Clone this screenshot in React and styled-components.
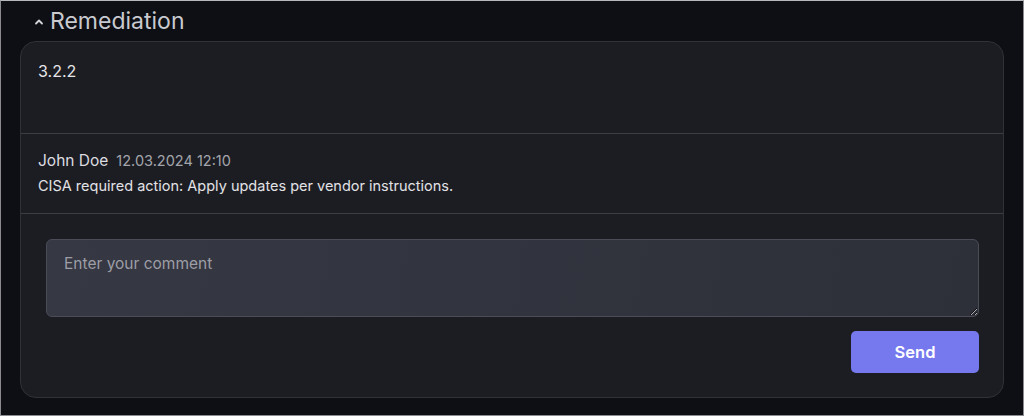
import React, { useState } from "react";
import styled, { createGlobalStyle } from "styled-components";

const GlobalStyle = createGlobalStyle`
  html, body {
    margin: 0;
    padding: 0;
    background: #0e0f14;
  }
  body {
    font-family: Inter, "Noto Sans", "Liberation Sans", sans-serif;
  }
`;

const Frame = styled.div`
  box-sizing: border-box;
  width: 1024px;
  height: 416px;
  border: 1px solid #8c8c90;
  border-top-color: #b8b8bc;
  background: #0e0f14;
  padding: 4px 19px 0 19px;
  display: flex;
  flex-direction: column;
  overflow: hidden;
`;

const Header = styled.div`
  display: flex;
  align-items: center;
  gap: 5px;
  height: 32px;
  padding-left: 13px;
  margin-bottom: 4px;
`;

const Chevron = styled.svg`
  width: 12px;
  height: 12px;
  margin-top: 1px;
`;

const Title = styled.h2`
  margin: 0;
  font-size: 23px;
  font-weight: 400;
  color: #c9cacf;
`;

const Card = styled.div`
  box-sizing: border-box;
  height: 357px;
  background: #1c1d23;
  border: 1px solid #303139;
  border-radius: 16px;
  display: flex;
  flex-direction: column;
`;

const Section = styled.div`
  padding: ${(p) => p.$pad};
  height: ${(p) => p.$h};
  box-sizing: border-box;
  border-bottom: ${(p) => (p.$divider ? "1.5px solid #3b3c44" : "none")};
`;

const Version = styled.div`
  font-size: 16px;
  color: #e6e6ea;
`;

const MetaRow = styled.div`
  display: flex;
  align-items: baseline;
  gap: 8px;
  margin-bottom: 7px;
`;

const Author = styled.span`
  font-size: 15.5px;
  color: #dcdce0;
`;

const Stamp = styled.span`
  font-size: 14.5px;
  color: #a4a5ab;
`;

const Body = styled.div`
  font-size: 14.5px;
  color: #e2e2e6;
`;

const CommentBox = styled.textarea`
  box-sizing: border-box;
  display: block;
  width: 100%;
  height: 78px;
  padding: 14px 17px;
  background: linear-gradient(100deg, #363843 0%, #2d2f39 100%);
  border: 1px solid #4a4c56;
  border-radius: 6px;
  color: #e6e6ea;
  font-family: Inter, "Noto Sans", "Liberation Sans", sans-serif;
  font-size: 15.5px;
  outline: none;
  resize: vertical;

  &::placeholder {
    color: #9d9ea6;
  }
`;

const Actions = styled.div`
  display: flex;
  justify-content: flex-end;
  margin-top: 14px;
`;

const SendButton = styled.button`
  width: 128px;
  height: 42px;
  border: none;
  border-radius: 5px;
  background: #7678ee;
  color: #ffffff;
  font-family: Inter, "Noto Sans", "Liberation Sans", sans-serif;
  font-size: 16.5px;
  font-weight: 600;
  cursor: pointer;
`;

export default function App() {
  const [comment, setComment] = useState("");

  return (
    <>
      <GlobalStyle />
      <Frame>
        <Header>
          <Chevron viewBox="0 0 12 12">
            <path
              d="M3 7.5 L6 4.5 L9 7.5"
              fill="none"
              stroke="#d4d4d8"
              strokeWidth="1.8"
              strokeLinecap="round"
              strokeLinejoin="round"
            />
          </Chevron>
          <Title>Remediation</Title>
        </Header>
        <Card>
          <Section $pad="19px 17px" $h="92px" $divider>
            <Version>3.2.2</Version>
          </Section>
          <Section $pad="17px 17px" $h="80px" $divider>
            <MetaRow>
              <Author>John Doe</Author>
              <Stamp>12.03.2024 12:10</Stamp>
            </MetaRow>
            <Body>CISA required action: Apply updates per vendor instructions.</Body>
          </Section>
          <Section $pad="25px 24px 0 25px">
            <CommentBox
              placeholder="Enter your comment"
              value={comment}
              onChange={(e) => setComment(e.target.value)}
            />
            <Actions>
              <SendButton>Send</SendButton>
            </Actions>
          </Section>
        </Card>
      </Frame>
    </>
  );
}
